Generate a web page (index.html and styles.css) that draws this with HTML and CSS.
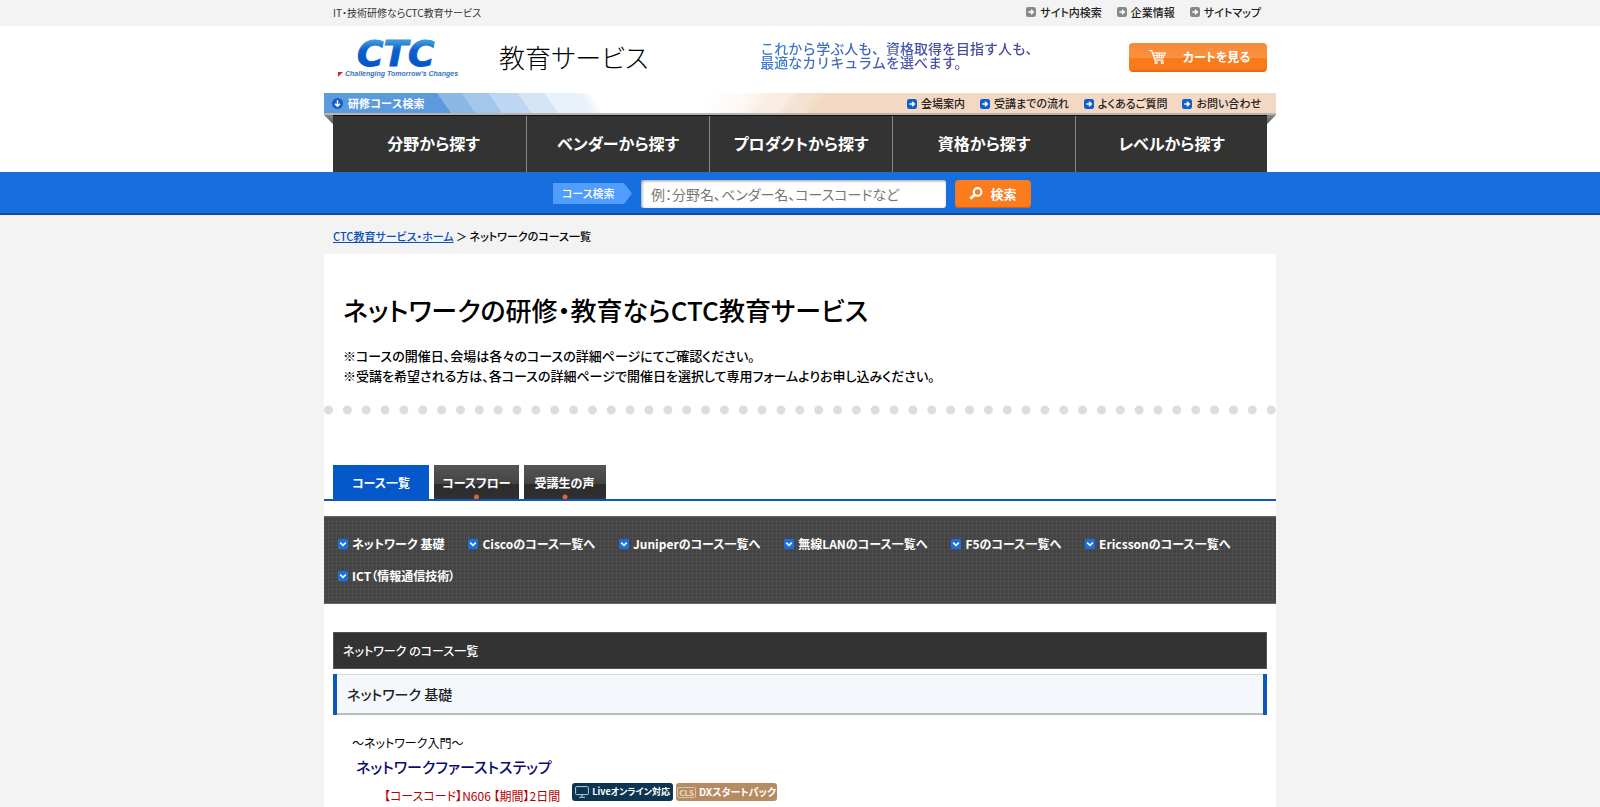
FILE: index.html
```html
<!DOCTYPE html>
<html lang="ja">
<head>
<meta charset="utf-8">
<meta name="viewport" content="width=device-width, initial-scale=1">
<title>ネットワークのコース一覧 | CTC教育サービス</title>
<link rel="stylesheet" href="styles.css">
</head>
<body>
<svg class="defs" width="0" height="0" aria-hidden="true">
  <symbol id="arrow" viewBox="0 0 11 11"><rect width="11" height="11" rx="2.5" fill="currentColor"/><path d="M2.5 5.5h5M5.5 3l2.6 2.5L5.5 8" fill="none" stroke="#fff" stroke-width="1.6"/></symbol>
  <symbol id="down" viewBox="0 0 10 10"><rect width="10" height="10" rx="1" fill="#1b6fe0"/><path d="M2.2 3.6 5 6.3l2.8-2.7" fill="none" stroke="#fff" stroke-width="1.6"/></symbol>
</svg>
<div class="topbar">
  <div class="inner topbar-row">
    <p class="tagline">IT・技術研修ならCTC教育サービス</p>
    <ul class="mini-links gray">
      <li><a href="#"><svg class="ico"><use href="#arrow"/></svg>サイト内検索</a></li>
      <li><a href="#"><svg class="ico"><use href="#arrow"/></svg>企業情報</a></li>
      <li><a href="#"><svg class="ico"><use href="#arrow"/></svg>サイトマップ</a></li>
    </ul>
  </div>
</div>
<header class="header">
  <div class="inner brand">
    <a class="logo" href="#" aria-label="CTC">
      <svg width="126" height="44" viewBox="0 0 126 44">
        <defs><linearGradient id="lg" x1="0" y1="0" x2="0" y2="1"><stop offset="0.2" stop-color="#3d97dc"/><stop offset="0.42" stop-color="#0a5fcf"/><stop offset="1" stop-color="#0253c6"/></linearGradient></defs>
        <text class="logo-name" x="24" y="31" fill="url(#lg)" stroke="url(#lg)">CTC</text>
        <path d="M5 37h5l-1.6 1.6L5 42z" fill="#e02020"/>
        <text class="logo-sub" x="12" y="41">Challenging Tomorrow's Changes</text>
      </svg>
    </a>
    <p class="service">教育サービス</p>
    <p class="slogan">これから学ぶ人も、資格取得を目指す人も、<br>最適なカリキュラムを選べます。</p>
    <a class="cart" href="#">
      <svg width="19" height="16" viewBox="0 0 19 16" fill="none" stroke="#fff" stroke-width="1.2"><path d="M1 1.5h2.6L7 11.2h8.5M4.6 4h12.6l-2.2 5H6.4M6 6.5h10M8.5 4l.8 5M11.2 4v5M14.2 4l-.8 5"/><circle cx="8" cy="13.6" r="1.1"/><circle cx="14.3" cy="13.6" r="1.1"/></svg>
      <span>カートを見る</span>
    </a>
  </div>
  <div class="wide strip">
    <div class="strip-left">
      <svg width="11" height="11" viewBox="0 0 11 11"><circle cx="5.5" cy="5.5" r="5.5" fill="#1560c4"/><path d="M5.5 2.2v6M3 5.8l2.5 2.5L8 5.8" fill="none" stroke="#fff" stroke-width="1.4"/></svg>
      <span>研修コース検索</span>
    </div>
    <ul class="mini-links blue">
      <li><a href="#"><svg class="ico"><use href="#arrow"/></svg>会場案内</a></li>
      <li><a href="#"><svg class="ico"><use href="#arrow"/></svg>受講までの流れ</a></li>
      <li><a href="#"><svg class="ico"><use href="#arrow"/></svg>よくあるご質問</a></li>
      <li><a href="#"><svg class="ico"><use href="#arrow"/></svg>お問い合わせ</a></li>
    </ul>
  </div>
  <div class="wide nav-row">
    <span class="fold fold-left"></span>
    <nav class="nav">
      <a href="#">分野から探す</a>
      <a href="#">ベンダーから探す</a>
      <a href="#">プロダクトから探す</a>
      <a href="#">資格から探す</a>
      <a href="#">レベルから探す</a>
    </nav>
    <span class="fold fold-right"></span>
  </div>
</header>
<form class="search" role="search">
  <label class="search-tag" for="q">コース検索</label>
  <input id="q" class="search-box" type="text" placeholder="例：分野名、ベンダー名、コースコードなど">
  <button class="search-btn" type="button">
    <svg width="14" height="13" viewBox="0 0 14 13" fill="none" stroke="#fff"><circle cx="8.6" cy="5" r="3.8" stroke-width="2.2"/><path d="M5.6 7.8 1.4 11.6" stroke-width="2.8"/></svg>
    <span>検索</span>
  </button>
</form>
<p class="inner crumbs"><a href="#">CTC教育サービス・ホーム</a> ＞ ネットワークのコース一覧</p>
<main class="wide main">
  <div class="intro">
    <h1>ネットワークの研修・教育ならCTC教育サービス</h1>
    <p>※コースの開催日、会場は各々のコースの詳細ページにてご確認ください。<br>※受講を希望される方は、各コースの詳細ページで開催日を選択して専用フォームよりお申し込みください。</p>
  </div>
  <svg class="dots" aria-hidden="true"><line x1="4.5" y1="5" x2="99.5%" y2="5" pathLength="50" stroke="#ddd" stroke-width="9" stroke-linecap="round" stroke-dasharray="0 0.9999"/></svg>
  <div class="tabs">
    <a class="tab active" href="#">コース一覧</a>
    <a class="tab" href="#">コースフロー</a>
    <a class="tab" href="#">受講生の声</a>
  </div>
  <ul class="jump">
    <li><a href="#"><svg class="chev"><use href="#down"/></svg>ネットワーク 基礎</a></li>
    <li><a href="#"><svg class="chev"><use href="#down"/></svg>Ciscoのコース一覧へ</a></li>
    <li><a href="#"><svg class="chev"><use href="#down"/></svg>Juniperのコース一覧へ</a></li>
    <li><a href="#"><svg class="chev"><use href="#down"/></svg>無線LANのコース一覧へ</a></li>
    <li><a href="#"><svg class="chev"><use href="#down"/></svg>F5のコース一覧へ</a></li>
    <li><a href="#"><svg class="chev"><use href="#down"/></svg>Ericssonのコース一覧へ</a></li>
    <li><a href="#"><svg class="chev"><use href="#down"/></svg>ICT（情報通信技術）</a></li>
  </ul>
  <section class="courses">
    <h2>ネットワーク のコース一覧</h2>
    <h3>ネットワーク 基礎</h3>
    <article class="course">
      <p class="course-lead">～ネットワーク入門～</p>
      <h4><a href="#">ネットワークファーストステップ</a></h4>
      <div class="course-info">
        <p class="code">【コースコード】N606 【期間】2日間</p>
        <span class="badge live"><svg width="14" height="12" viewBox="0 0 14 12" fill="none" stroke="#b9cbd8"><rect x=".6" y=".6" width="12.8" height="8" rx="1"/><path d="M7 8.6v2.4M4 11.3h6"/></svg>Liveオンライン対応</span>
        <span class="badge dx"><span class="cls">CLS</span>DXスタートパック</span>
      </div>
    </article>
  </section>
</main>
</body>
</html>
```
FILE: styles.css
```css
* { box-sizing: border-box; }
body {
  margin: 0;
  background: #f3f3f3;
  color: #000;
  font: 500 13px/20px "Noto Sans CJK JP", sans-serif;
  font-feature-settings: "palt";
}
h1, h2, h3, h4, p, ul { margin: 0; padding: 0; }
ul { list-style: none; }
a { color: inherit; text-decoration: none; }
svg { flex: none; }
.defs { display: block; }
.wide { width: 100%; max-width: 952px; margin: 0 auto; }
.inner { width: 100%; max-width: 952px; margin: 0 auto; padding: 0 9px; }

.topbar-row { display: flex; justify-content: space-between; height: 26px; }
.tagline { font-size: 10px; font-weight: 400; line-height: 26px; color: #333; }
.mini-links { display: flex; gap: 15px; padding-right: 6px; font-size: 11px; line-height: 24px; color: #222; }
.mini-links a { display: flex; align-items: center; gap: 4px; }
.ico { width: 10px; height: 10px; }
.gray .ico { color: #888; }
.blue .ico { color: #0c5fd0; }

.header { background: #fff; }
.brand { display: flex; height: 67px; align-items: flex-start; }
.logo { display: block; padding-top: 9px; }
.logo svg { display: block; overflow: visible; }
.logo-name { font: italic 700 36px "DejaVu Sans", sans-serif; }
.logo-sub { font: italic 700 7px "Liberation Sans", sans-serif; fill: #3673bd; }
.service { margin-left: 40px; font-size: 26px; font-weight: 300; line-height: 62px; color: #000; }
.slogan {
  margin: 15px auto 0 112px;
  padding-bottom: 3px;
  font-size: 14px;
  line-height: 14px;
  font-feature-settings: normal;
  color: transparent;
  background: linear-gradient(90deg, #3a80cf, #4a4aa0 70%);
  -webkit-background-clip: text;
  background-clip: text;
}
.cart {
  display: flex;
  align-items: center;
  gap: 16px;
  width: 138px;
  height: 29px;
  margin-top: 17px;
  padding: 0 0 1px 19px;
  border-radius: 4px;
  background: linear-gradient(#f58a3c, #fb913f 50%, #f97a1a 52%, #f97a1a 90%, #d9641a);
  color: #fff;
  font-size: 12px;
  font-weight: 700;
}

.strip {
  display: flex;
  justify-content: space-between;
  height: 22px;
  border-bottom: 2px solid #b8b4b0;
  background:
    linear-gradient(305deg, #f3d9c3 380px, #f6e2d2 390px 402px, #faeee4 410px 425px, #fdf7f2 440px, transparent 475px) right / 620px 100% no-repeat,
    linear-gradient(55deg, #5b9bdd 104px, #8cb8e6 104px 124px, #a3c7eb 124px 146px, #bdd6f1 146px 170px, #d5e5f6 170px 192px, #e9f1fa 192px 220px, transparent 230px) left / 330px 100% no-repeat,
    #fff;
}
.strip-left { display: flex; align-items: center; gap: 5px; padding-left: 8px; color: #fff; font-size: 11px; font-weight: 700; font-feature-settings: normal; }
.strip .mini-links { padding-right: 15px; line-height: 21px; }

.nav-row { display: flex; }
.fold { flex: none; width: 9px; height: 9px; background: linear-gradient(#888, #555); }
.fold-left { clip-path: polygon(0 0, 100% 0, 100% 100%); }
.fold-right { clip-path: polygon(0 0, 100% 0, 0 100%); }
.nav { flex: 1; display: grid; grid-template-columns: 193fr 183fr 183fr 183fr 192fr; background: #333; border-top: 1px solid #111; }
.nav a { padding-bottom: 2px; color: #fff; font-size: 16px; font-weight: 700; line-height: 54px; text-align: center; }
.nav a:first-child { padding-left: 8px; }
.nav a + a { border-left: 1px solid #888; }

.search {
  display: flex;
  justify-content: center;
  align-items: center;
  height: 43px;
  padding: 2px 16px 0 0;
  background: #176fdf;
  border-bottom: 2px solid #174a94;
}
.search-tag {
  width: 79px;
  padding-left: 9px;
  background: #519dfb;
  clip-path: polygon(0 0, 71px 0, 100% 50%, 71px 100%, 0 100%);
  color: #fff;
  font-size: 11px;
  line-height: 21px;
}
.search-box {
  width: 305px;
  height: 28px;
  margin: 0 9px;
  padding: 0 10px;
  border: 0;
  border-radius: 3px;
  background: #fff;
  box-shadow: inset 1px 1px 3px #999;
  font: 400 14px "Noto Sans CJK JP", sans-serif;
  font-feature-settings: "palt";
}
.search-box::placeholder { color: #777; }
.search-btn {
  display: flex;
  align-items: center;
  justify-content: center;
  gap: 7px;
  width: 76px;
  height: 28px;
  padding: 0;
  border: 0;
  border-radius: 4px;
  background: #fb7c1c;
  box-shadow: inset 0 -1px 1px #c9601a;
  color: #fff;
  font: 700 13px "Noto Sans CJK JP", sans-serif;
}

.crumbs { padding-top: 4px; font-size: 11px; line-height: 35px; }
.crumbs a { color: #0a50b8; text-decoration: underline; }

.main { background: #fff; padding-bottom: 4px; }
.intro { padding: 36px 19px 0; }
.intro h1 { margin-bottom: 16px; font-size: 26px; font-weight: 500; line-height: 40px; }
.dots { display: block; width: 100%; height: 10px; margin-top: 19px; }

.tabs { display: flex; gap: 5px; margin-top: 50px; padding-left: 9px; border-bottom: 2px solid #0f57bb; }
.tab {
  min-width: 82px;
  padding: 2px 8px 0;
  background:
    radial-gradient(circle at 50% 32px, #e0632b 2px, transparent 3px),
    linear-gradient(#555, #444 55%, #2c2c2c 55%, #303030);
  color: #fff;
  font-size: 12px;
  font-weight: 700;
  line-height: 32px;
  text-align: center;
}
.tab.active { padding: 2px 19px 0; background: #0558ca; }

.jump {
  display: flex;
  flex-wrap: wrap;
  gap: 12px 24px;
  margin-top: 15px;
  padding: 17px 14px;
  border: 1px solid #666;
  border-width: 1px 0;
  background:
    repeating-linear-gradient(90deg, #5a5a5a66 0 1px, transparent 1px 4px),
    repeating-linear-gradient(#5a5a5a66 0 1px, transparent 1px 4px),
    #434343;
  color: #fff;
}
.jump a { display: flex; align-items: center; gap: 4px; font-size: 12px; font-weight: 700; }
.chev { width: 10px; height: 10px; }

.courses { padding: 28px 9px 0; }
.courses h2 { padding: 0 9px; border: 1px solid #555; background: #333; color: #fff; font-size: 12px; font-weight: 500; line-height: 35px; }
.courses h3 {
  margin-top: 5px;
  padding: 0 10px;
  border: solid #0f57bb;
  border-width: 0 4px;
  background: linear-gradient(#ddd 1px, #f4f8fd 1px calc(100% - 2px), #bbb calc(100% - 2px));
  color: #222;
  font-size: 14px;
  font-weight: 500;
  line-height: 41px;
}
.course { padding: 18px 19px 0; }
.course-lead { font-size: 12px; font-weight: 400; }
.course h4 { margin-bottom: 2px; padding-left: 4px; color: #0a0a70; font-size: 15px; font-weight: 500; line-height: 28px; }
.course-info { display: flex; align-items: flex-start; padding-left: 32px; }
.code { margin: 3px 12px 0 0; color: #b80000; font-size: 12px; font-weight: 400; }
.badge { display: flex; align-items: center; justify-content: center; gap: 3px; width: 101px; height: 18px; margin-right: 3px; border-radius: 3px; color: #fff; font-size: 9px; line-height: 18px; font-weight: 700; white-space: nowrap; }
.live { background: #0b3550; }
.dx { background: #b58c62; font-size: 10px; }
.cls { padding: 0 1px; border: 1px solid #d8c3ac; border-radius: 2px; color: #ecdccb; font-size: 8px; line-height: 9px; }
```
